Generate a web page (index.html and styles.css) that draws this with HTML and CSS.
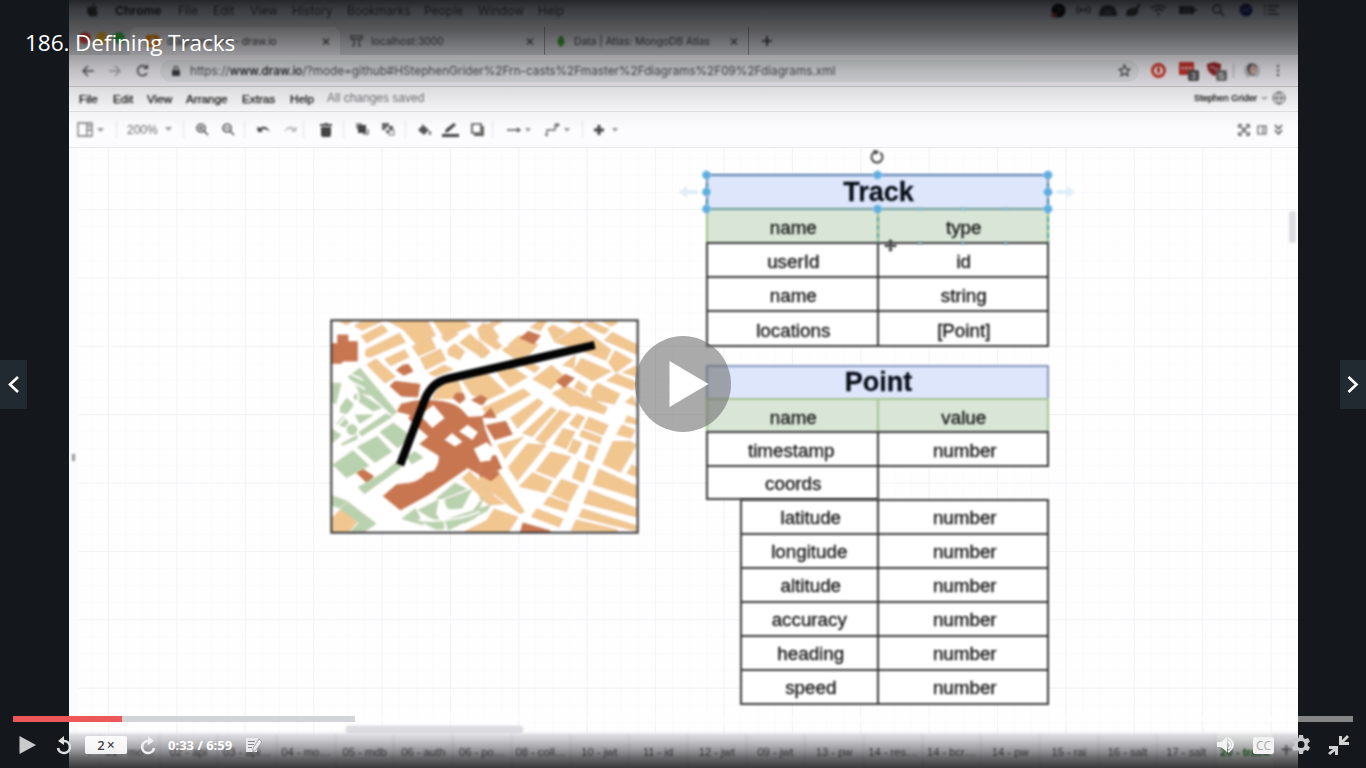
FILE: index.html
```html
<!DOCTYPE html>
<html lang="en">
<head>
<meta charset="utf-8">
<title>186. Defining Tracks</title>
<link rel="stylesheet" href="styles.css">
</head>
<body>
<main class="player">
<section class="video">
  <div class="mac-bar">
    <svg width="13" height="14" viewBox="0 0 13 14"><path fill="currentColor" d="M9 0C7 .3 6 2 6.200 3.200 8 3 9 1.500 9 0ZM11.500 5C10 3 8 3.500 6.500 4 3 2.600 1 4.500 1 7.300 1 10 3 13.500 4.500 13.500c1 0 1.500-.5 2.500-.5s1.500.5 2.200.5c1.200 0 2.200-2 2.800-3.500-2-1-2-4-.5-5Z"/></svg>
    <b>Chrome</b><span>File</span><span>Edit</span><span>View</span><span>History</span><span>Bookmarks</span><span>People</span><span>Window</span><span>Help</span>
    <svg width="15" height="15" viewBox="0 0 15 15"><circle cx="7.500" cy="7.500" r="7" fill="#14161b"/><path d="M4 4l8 3M8 8l-3 5" stroke="#687080" stroke-width="1"/><circle cx="3" cy="12" r="2.500" fill="#b43838"/></svg>
    <svg width="17" height="12" viewBox="0 0 17 12"><path d="M4 2Q0 6 4 10M13 2Q17 6 13 10M5 6h7M7 4 5 6l2 2M10 4l2 2-2 2" fill="none" stroke="currentColor" stroke-width="1.200"/></svg>
    <svg width="18" height="13" viewBox="0 0 18 13"><path fill="currentColor" d="M0 12C0 4 4 1 9 1s9 3 9 11Z"/><path d="M5 11c0-5 8-5 8 0M9 7v6" fill="none" stroke="#7c8490"/></svg>
    <svg width="17" height="14" viewBox="0 0 17 14"><path fill="currentColor" d="m1 12 1-5 7-3 1 2 4-6 1 2-2 4c1 4-2 7-5 7H1Z"/></svg>
    <svg width="17" height="13" viewBox="0 0 17 13"><path d="M1 4q7-5 15 0M4 7q5-4 9 0M8.500 8v4" fill="none" stroke="currentColor" stroke-width="1.500"/></svg>
    <svg width="20" height="12" viewBox="0 0 20 12"><path d="M1 2h15v8H1ZM16 5h3v2h-3Z" fill="currentColor"/><path d="M7 1v10M11 1v10" stroke="#7d8490"/></svg>
    <svg width="13" height="13" viewBox="0 0 13 13"><circle cx="5" cy="5" r="4" fill="none" stroke="currentColor" stroke-width="1.500"/><path d="m8 8 4 4" stroke="currentColor" stroke-width="1.500"/></svg>
    <svg width="14" height="14" viewBox="0 0 14 14"><circle cx="7" cy="7" r="6.500" fill="#283078"/><path d="m3 9 3-3 2 2 3-4" stroke="#9aa8e8" fill="none"/></svg>
    <svg width="15" height="12" viewBox="0 0 15 12"><path d="M0 2h2M0 6h2M0 10h2M4 2h11M4 6h8M4 10h11" stroke="currentColor" stroke-width="1.500"/></svg>
  </div>
  <div class="tab-strip">
    <div class="lights"><i class="red"></i><i class="yellow"></i><i class="green"></i></div>
    <div class="tab active"><svg width="13" height="12" viewBox="0 0 13 12"><rect width="13" height="12" rx="1" fill="#f08705"/><path d="M6.500 3 3.500 9M6.500 3l3 6" stroke="#fff" stroke-width="1.500"/></svg><span>diagrams.xml - draw.io</span><em>×</em></div>
    <div class="tab second"><svg width="13" height="12" viewBox="0 0 13 12"><path d="M1 1h11v3H1ZM4 4v7H2M9 4v7h2" fill="none" stroke="#444" stroke-width="1.200"/></svg><span>localhost:3000</span><em>×</em></div>
    <div class="tab third"><svg width="8" height="12" viewBox="0 0 8 12"><path d="M4 0Q11 7 4 12-3 7 4 0Z" fill="#3f9c35"/></svg><span>Data | Atlas: MongoDB Atlas</span><em>×</em></div>
    <svg class="new-tab" width="12" height="12" viewBox="0 0 12 12"><path d="M6 1v10M1 6h10" stroke="#333" stroke-width="1.700"/></svg>
  </div>
  <div class="address-bar">
    <svg width="12" height="12" viewBox="0 0 12 12"><path d="M12 6H1M6 1 1 6l5 5" fill="none" stroke="#555" stroke-width="1.500"/></svg>
    <svg width="12" height="12" viewBox="0 0 12 12"><path d="M0 6h11M6 1l5 5-5 5" fill="none" stroke="#aaa" stroke-width="1.400"/></svg>
    <svg width="13" height="13" viewBox="0 0 13 13"><path d="M11 9A5 5 0 1 1 10 3" fill="none" stroke="#555" stroke-width="1.600"/><path d="M12 0v5H7Z" fill="#555"/></svg>
    <div class="url"><svg width="8" height="10" viewBox="0 0 8 10"><rect y="4" width="8" height="6" rx="1" fill="#444"/><path d="M2 5V2.500a2 2 0 0 1 4 0V5" fill="none" stroke="#444" stroke-width="1.200"/></svg><span>https://<b>www.draw.io</b>/?mode=github#HStephenGrider%2Frn-casts%2Fmaster%2Fdiagrams%2F09%2Fdiagrams.xml</span><svg class="star" width="13" height="13" viewBox="0 0 24 24"><path d="m12 2 3 7 7 .6-5.500 5 1.700 7L12 18l-6.200 3.600 1.700-7-5.500-5L9 9Z" fill="none" stroke="#444" stroke-width="2.300"/></svg></div>
    <div class="extensions">
      <svg width="15" height="15" viewBox="0 0 15 15"><circle cx="7.500" cy="7.500" r="6" fill="#fff" stroke="#df3528" stroke-width="2.800"/><path d="M6 5q1.500-3 3 0v4q-1.500 3-3 0Z" fill="#df3528"/></svg>
      <svg width="20" height="20" viewBox="0 0 20 20"><rect x="0" y="1" width="15" height="13" rx="1" fill="#d43931"/><path d="M2 7h11" stroke="#eee" stroke-width="1.500" stroke-dasharray="3 1"/><rect x="9" y="9" width="11" height="11" rx="2" fill="#555"/><text x="12" y="18" font-size="9" fill="#fff">3</text></svg>
      <svg width="20" height="20" viewBox="0 0 20 20"><path d="M7 1 14 3c0 7-2 9-7 12C2 12 0 9 0 3Z" fill="#a22a2d"/><path d="M3 7q2-3 4 0t4 0" stroke="#eee" fill="none"/><rect x="9" y="9" width="11" height="11" rx="2" fill="#777"/><text x="12" y="18" font-size="9" fill="#fff">5</text></svg>
      <i class="rule"></i>
      <svg width="16" height="18" viewBox="0 0 16 18"><circle cx="8" cy="9" r="8" fill="#c6cad1"/><path d="M3 7Q4 0 10 2q4 1 2 6l-2 6-5-2Z" fill="#514d50"/><ellipse cx="9" cy="8" rx="3.500" ry="5" fill="#d7adab"/><path d="m4 15 7-1 2 3H5Z" fill="#fff"/></svg>
      <svg width="4" height="13" viewBox="0 0 4 13"><path d="M2 1v2M2 5.500v2M2 10v2" stroke="#555" stroke-width="2.200"/></svg>
    </div>
  </div>
  <div class="app-menu"><span>File</span><span>Edit</span><span>View</span><span>Arrange</span><span>Extras</span><span>Help</span><span class="saved">All changes saved</span><span class="user">Stephen Grider</span><svg width="7" height="5" viewBox="0 0 7 5"><path d="m1 1 2.500 2L6 1" fill="none" stroke="#444"/></svg><svg width="14" height="14" viewBox="0 0 14 14"><path d="M7 1a6 6 0 1 0 .1 0M1 7h12M7 1Q2 7 7 13 12 7 7 1" fill="none" stroke="#555"/></svg></div>
  <div class="toolbar">
    <svg width="27" height="16" viewBox="0 0 27 16"><path d="M1 1h14v13H1ZM10 1v13M10 4h5M10 8h5" fill="none" stroke="#777" stroke-width="1.300"/><path d="M20 6h7l-3.500 4Z" fill="#999"/></svg>
    <i></i><span class="zoom">200%</span><svg width="7" height="5" viewBox="0 0 7 5"><path d="M0 0h7L3.500 4Z" fill="#999"/></svg><i></i>
    <svg width="13" height="13" viewBox="0 0 13 13"><path d="M5 1a4 4 0 1 0 .1 0M8 8l4 4M3 5h4M5 3v4" fill="none" stroke="#555" stroke-width="1.600"/></svg>
    <svg width="13" height="13" viewBox="0 0 13 13"><path d="M5 1a4 4 0 1 0 .1 0M8 8l4 4M3 5h4" fill="none" stroke="#555" stroke-width="1.600"/></svg><i></i>
    <svg width="14" height="10" viewBox="0 0 14 10"><path d="m0 2 1 5h5L4 5q4-3 9 2Q9-1 3 3Z" fill="#444"/></svg>
    <svg width="14" height="10" viewBox="0 0 14 10"><path d="m14 2-1 5H8l2-2Q6 2 1 7 5-1 11 3Z" fill="#bbb"/></svg><i></i>
    <svg width="12" height="14" viewBox="0 0 12 14"><path d="M0 1h4l1-1h2l1 1h4v2H0ZM1 4h10v8q0 2-2 2H3q-2 0-2-2Z" fill="#444"/></svg><i></i>
    <svg width="13" height="13" viewBox="0 0 13 13"><path d="M7 11h5V6" fill="none" stroke="#777" stroke-width="1.500"/><rect width="6" height="6" fill="#999"/><rect x="2" y="2" width="8" height="8" fill="#444"/></svg>
    <svg width="13" height="13" viewBox="0 0 13 13"><rect x="0" y="0" width="7" height="7" fill="#666"/><rect x="4" y="3" width="7" height="7" fill="#555"/><path d="m3 6 3-3 2 3-3 2Z" fill="#eee"/><rect x="7" y="7" width="5" height="5" fill="#eee" stroke="#777"/></svg><i></i>
    <svg width="13" height="12" viewBox="0 0 13 12"><path d="m5 1 6 5-5 5-6-5Z" fill="#555"/><path d="m4 0 3 3M12 7q2 3 0 4-2-1 0-4" stroke="#666" fill="#777"/></svg>
    <svg width="17" height="16" viewBox="0 0 17 16"><path d="m3 11 1-4 8-6 2 2-8 7Z" fill="#444"/><path d="M0 13.500h17" stroke="#444" stroke-width="3"/></svg>
    <svg width="13" height="13" viewBox="0 0 13 13"><path d="M1 1h9v9H1Z" fill="#fff" stroke="#555" stroke-width="1.700"/><path d="M12 3v9H3" fill="none" stroke="#555" stroke-width="1.800"/></svg><i></i>
    <svg width="24" height="8" viewBox="0 0 24 8"><path d="M0 4h12M10 2l3 2-3 2" stroke="#555" fill="none" stroke-width="1.300"/><path d="M18 2h6l-3 4Z" fill="#999"/></svg>
    <svg width="25" height="14" viewBox="0 0 25 14"><path d="M2 13V7h8V2h4M0 11l2 2M11 0l3 2-3 2" stroke="#666" fill="none" stroke-width="1.300"/><path d="M19 5h6l-3 4Z" fill="#999"/></svg><i></i>
    <svg width="25" height="12" viewBox="0 0 25 12"><path d="M6 1v10M1 6h10" stroke="#444" stroke-width="3"/><path d="M19 4h6l-3 4Z" fill="#999"/></svg>
    <div class="view-tools"><svg width="12" height="12" viewBox="0 0 12 12"><path d="M1 4V1h3M8 1h3v3M11 8v3H8M4 11H1V8M3 3l6 6M9 3 3 9" fill="none" stroke="#444" stroke-width="1.500"/></svg><svg width="10" height="10" viewBox="0 0 10 10"><path d="M1 1h8v8H1ZM6 1v8" fill="none" stroke="#555" stroke-width="1.200"/></svg><svg width="9" height="12" viewBox="0 0 9 12"><path d="m1 1 3.500 4L8 1M1 6l3.500 4L8 6" fill="none" stroke="#444" stroke-width="1.400"/></svg></div>
  </div>
  <div class="canvas">
    <svg class="map" viewBox="33 30 921 639">
      <rect x="33" y="30" width="921" height="639" fill="#fff"/>
      <g class="orange">
        <path d="M60 34h35l-15 10ZM105 48l20-14h60l-38 17-20 9ZM125 78l62-32 15 18-62 34ZM138 120l100-49 17 25-105 45-13-4ZM208 34h115l22 42-54 28-40-46ZM278 110l55-24 14 29-51 22ZM302 145l59-27 15 32-58 28ZM196 147l58-27 12 21-54 25ZM142 164l26-16 57 52-30 18ZM328 190l45-24 24 12-51 20ZM342 34h92l17 14-78 33ZM365 82l33-25 15 16-34 22ZM385 118l20-16 28 22-15 24-33-14ZM420 98l30-25 58 54-18 17ZM473 56l18-16 24 12 20 28-12 22-45-28ZM345 251l28-38 38-9 18 54-24 6-67 2ZM428 212l52-12 15 63-38-8ZM427 505l22-20 70 70-12 27ZM37 625l24-25 52 33-28 32H37ZM435 665l80-40v40Z"/>
        <g transform="translate(480 0)">
          <path d="M12 50 42 34h22l-35 22ZM0 70l15-7 50 45-15 10L0 85ZM0 95l28 29-28 17ZM68 120l23-14 45 32-20 14ZM88 102l30-25 55 27-30 33ZM153 52l25-18h20l-18 28ZM204 56l16-10 38 20-36 24ZM266 34h44l-17 6ZM315 44l17-10 54 25-14 12ZM370 34h40v6l-18 8ZM224 95l75-45 93 70-15 30-77-30ZM375 91l22-23 72 36v28ZM386 157l20-34 50 29-48 35ZM53 182l25-23 62 42-50 30-30-34ZM0 190l25 5 50 49L0 278ZM112 155l20-10 45 28-12 14ZM160 207l55-40 32 28-35 42ZM250 165l35-27-4 36ZM282 180l22-34 88 38-54 28ZM430 187l38-18v30ZM382 212l28-20 58 25-8 22ZM219 250l40-22 52 28-7 28-32 4ZM284 233l11-20 26 18-6 17ZM335 243l18-22 65 31-15 29-65-13ZM295 288l23-30 63 35-10 18ZM438 276l20-16 12 28ZM8 295l122-57 20 15L30 323ZM93 324l81-57 14 12-75 75ZM130 369l83-76 14 7-71 79ZM168 388l72-87 31 12-80 88ZM269 341l23-28 21 9-20 34ZM312 353l15-30 57 23-15 28ZM222 401l28-45 34 10-26 50ZM300 378l7-17 57 22-5 18ZM266 424l14-35 24 10-17 32ZM315 443l13-39 25 9-15 40ZM435 335l8-17 25 10v14ZM411 373l16-28 37 16-12 22ZM54 406l73-23-30 32-22 30ZM86 472l57-70 53 5-84 104ZM170 482l42-55 59 14-46 62ZM278 503l18-48 32 12-18 49ZM120 529l38-40 57 25-20 33ZM216 553l29-44 50 18-26 47ZM192 583l15-22 60 21-8 22ZM156 619l15-22 77 30-11 23ZM369 462l31-67h50l18 10-47 81ZM442 490l15-25 11 8v26ZM340 523l17-45 111 50v35ZM312 579l15-38 141 54v25ZM297 620l12-22 159 49v15ZM275 661l14-30 122 28v5ZM0 500l52-20 80 125-12 5L0 518ZM0 529l71 52-41 3-30-20ZM0 665l43-67 70 24-28 43Z"/>
        </g>
      </g>
      <g class="brown">
        <path d="M36 101h17V75h31v20h28v58H69l-5 7H36ZM229 180l19-14 17-3 14 21-28 12ZM210 228l15-14 75 9-7 38-50-3ZM255 280l30-7q106-7 140 27l20 22 40-2 10 40 20 50-32 24 44 21 8 40-22 18-70-40-116 80-86 47-51-42 40-34 27-3q27 0 50-18l12-13 24-7q20-29 13-47l-56-34 26-22-60-54 6-12-40-10 12-22ZM399 264l10-15 21 1 5 17-16 13ZM455 270l22-12 22 11-15 16ZM110 489l13-15 38 25-20 19Z"/>
        <g transform="translate(480 0)"><path d="m120 84 25-20 36 13-20 25ZM229 215l27-22 27 12-30 28ZM0 255l20 10-10 18H0ZM5 322l28-28 15 29ZM18 346l59-12 20 39-53 16ZM0 345l20 50-20 10ZM0 450l47-14 18 39L0 500ZM121 666l8-27 81 23v4Z"/></g>
      </g>
      <g class="holes"><path d="m340 288 31 36-34 27-34-35ZM377 389l19-17 28 23-19 12ZM421 364l22-17 28 20-14 20ZM464 417l36-18 18 17-8 34-28 4Z"/></g>
      <g class="park">
        <path d="m82 202 38-28 110 132-12 10-65-60-36-8ZM36 220h27l-16 62-11-8ZM62 290l18-25 20 17-15 31-24-7ZM103 255l14-7 68 45-25 10-58-38ZM106 315h53l-40 25ZM50 342l20-24 15 20-10 13ZM117 367l80-55 19 8-91 58ZM64 402l48-27-2 13-43 18ZM36 357l27 19-27 23ZM180 366l40-27 51 39-38 36ZM112 411l60-32 43 46-50 32ZM39 464l60-42 48 45-68 36ZM184 493l45-37 15 15-110 80-20-19ZM260 440l25-15 24 17-34 20ZM36 557l46 17-25 20-21-9ZM60 596l24-20 84 65-36 24H92l25-27ZM246 626l40-30 24 49ZM295 600l60-30-8 40 14 25-35-15ZM350 565l55-46 35 18-76 30ZM375 569l80-30-30 57q-46 21-50-27ZM432 640l60-82-24 64ZM305 635l65 0 2 22-26 0ZM375 630l137-45-12 18-115 57Z"/><circle cx="96" cy="359" r="15"/>
      </g>
      <path class="paths" d="M79 200q55 50 27 88L50 350M75 208q40 15 60 30m-48-48q28 12 42 20M375 600q90 8 95-49M295 630q100 10 185-25"/>
      <path d="m240 465 70-184q20-63 75-75l439-101" fill="none" stroke="#050505" stroke-width="25"/>
      <rect x="34" y="31" width="919" height="637" fill="none" stroke="#333" stroke-width="6"/>
    </svg>

    <div class="diagram track">
      <div class="cell title">Track</div>
      <div class="cell head">name</div><div class="cell head">type</div>
      <div class="cell">userId</div><div class="cell">id</div>
      <div class="cell">name</div><div class="cell">string</div>
      <div class="cell">locations</div><div class="cell">[Point]</div>
    </div>
    <svg class="selection" viewBox="675 145 404 120" width="404" height="120">
      <path d="M707 175v34M1048 175v34M878 209v34M1048 209v34" stroke="#4ba3b5" stroke-width="1.500" stroke-dasharray="5 3"/>
      <path d="M707 175h341M707 209h341" stroke="#739fcb" stroke-width="1.500"/>
      <g fill="#5eade0" stroke="#b3d9f3" stroke-width=".7"><circle cx="706.500" cy="175" r="4.300"/><circle cx="877.500" cy="175" r="4.300"/><circle cx="1048" cy="175" r="4.300"/><circle cx="706.500" cy="192" r="4.300"/><circle cx="1048" cy="192" r="4.300"/><circle cx="706.500" cy="209" r="4.300"/><circle cx="877.500" cy="209" r="4.300"/><circle cx="1048" cy="209" r="4.300"/></g>
      <path d="M679 192l8-6v4h11v4h-11v4ZM1075 192l-8-6v4h-11v4h11v4Z" fill="#deedf8"/>
      <path d="m918 207 4 4m0-4-4 4m43-4 4 4m0-4-4 4m43-4 4 4m0-4-4 4M918 241l4 4m0-4-4 4m43-4 4 4m0-4-4 4m43-4 4 4m0-4-4 4" stroke="#8bc0dc"/>
      <path d="M880 152.500a5.500 5.500 0 1 1-5-.5" fill="none" stroke="#444" stroke-width="2"/><path d="m873 150 6 1-3 4Z" fill="#333"/>
      <path d="M890.500 240v11M885 245.500h11" stroke="#444" stroke-width="2.500"/><path d="m888 242 2.500-3 2.500 3m-5 7 2.500 3 2.500-3m-6-6-3 2.500 3 2.500m7-5 3 2.500-3 2.500" fill="#444"/>
    </svg>
    <div class="diagram point">
      <div class="cell title">Point</div>
      <div class="cell head">name</div><div class="cell head">value</div>
      <div class="cell nudge">timestamp</div><div class="cell nudge-right">number</div>
      <div class="cell last">coords</div>
    </div>
    <div class="diagram coords">
      <div class="cell">latitude</div><div class="cell">number</div>
      <div class="cell nudge">longitude</div><div class="cell">number</div>
      <div class="cell">altitude</div><div class="cell">number</div>
      <div class="cell nudge">accuracy</div><div class="cell">number</div>
      <div class="cell">heading</div><div class="cell">number</div>
      <div class="cell">speed</div><div class="cell">number</div>
    </div>
    <i class="panel-grip"></i><i class="scroll-y"></i><i class="scroll-x"></i>
  </div>
  <div class="sheet-tabs"><span class="more">⋮</span><span>01 - mo…</span><span>02 - api</span><span>03 - api…</span><span>04 - mo…</span><span>05 - mdb</span><span>06 - auth</span><span>06 - po…</span><span>08 - coll…</span><span>10 - jwt</span><span>11 - id</span><span>12 - jwt</span><span>09 - jwt</span><span>13 - pw</span><span>14 - res…</span><span>14 - bcr…</span><span>14 - pw</span><span>15 - rai</span><span>16 - salt</span><span>17 - salt</span><span class="current">20 - track</span><span class="add">+</span></div>
</section>
<div class="shade top"></div><div class="shade bottom"></div>
<h1>186. Defining Tracks</h1>
<div class="nav prev"><svg width="27" height="49" viewBox="0 0 27 49"><path d="m18 17-8 7.500 8 7.500" fill="none" stroke="#fff" stroke-width="2.600"/></svg></div>
<div class="nav next"><svg width="26" height="49" viewBox="0 0 26 49"><path d="m8.500 17 8 7.500-8 7.500" fill="none" stroke="#fff" stroke-width="2.600"/></svg></div>
<svg class="big-play" width="96" height="96" viewBox="0 0 96 96"><circle cx="48" cy="48" r="48" fill="#6d6d6d" fill-opacity=".58"/><path d="m34.500 25 39 23-39 23Z" fill="#fff"/></svg>
<div class="controls">
  <div class="progress"><i class="played"></i><i class="buffered"></i></div>
  <div class="buttons">
    <svg class="play" width="17" height="18" viewBox="0 0 17 18"><path d="m.5 0 16.500 9L.5 18Z" fill="#c9cacc"/></svg>
    <svg class="rewind" width="17" height="19" viewBox="0 0 17 19"><path d="M7 5h1a6 6 0 1 1-6 7" fill="none" stroke="#e0e1e3" stroke-width="2.600"/><path d="M2 5 8 0v9Z" fill="#e0e1e3"/></svg>
    <button>2<small>×</small></button>
    <svg class="forward" width="17" height="19" viewBox="0 0 17 19"><path d="M10 5H9a6 6 0 1 0 6 7" fill="none" stroke="#f1f1f3" stroke-width="2.600"/><path d="M15 5 9 0v9Z" fill="#f1f1f3"/></svg>
    <span class="time">0:33 / 6:59</span>
    <svg class="note" width="17" height="17" viewBox="0 0 17 17"><path d="M1 1h12l-1 14H1Z" fill="#e9e9eb"/><path d="M3 4.500h7M3 7.500h6M3 10.500h4" stroke="#87878d"/><path d="m14 2 3 3-6 8-3 2v-4Z" fill="#e9e9eb" stroke="#88888d" stroke-width=".7"/></svg>
    <div class="settings">
      <svg width="19" height="18" viewBox="0 0 19 18"><path d="M0 6h4l6-5v15l-6-5H0Z" fill="#f2f2f2"/><path d="M11 5q5 4 0 8M11 2q10 6 0 14" fill="none" stroke="#f2f2f2" stroke-width="2"/></svg>
      <span class="cc">CC</span>
      <svg width="20" height="20" viewBox="0 0 20 20"><path fill="#c9cacc" fill-rule="evenodd" d="m8 0-.5 3-1.700 1L3 3 1 6.500 3.300 8.500v2L1 12.500 3 16l2.800-1 1.700 1L8 19h4l.5-3 1.700-1 2.800 1 2-3.500-2.300-2v-2L19 6.500 17 3l-2.800 1-1.700-1L12 0ZM10 6a3.500 3.500 0 1 1 0 7 3.500 3.500 0 0 1 0-7Z"/></svg>
      <svg width="21" height="20" viewBox="0 0 21 20"><path d="M11 1h3v4l5-5 2 2-5 5h5v3H11ZM1 11h9v9H7v-4l-5 4-2-2 5-4H1Z" fill="#d1d2d4"/></svg>
    </div>
  </div>
</div>
</main>
</body>
</html>
```

FILE: styles.css
```css
* { box-sizing: border-box; }
body { margin: 0; background: #14171c; font-family: "Liberation Sans", Arial, sans-serif; overflow: hidden; }
.player { position: relative; width: 1366px; height: 768px; overflow: hidden; padding-left: 69px; background: #14171c; }
svg { display: block; flex: none; }
.video { width: 1229px; height: 768px; display: flex; flex-direction: column; background: #fdfdff; overflow: hidden; }
.mac-bar > *, .tab > *, .lights, .new-tab, .address-bar > svg, .url > *, .extensions, .app-menu > *, .toolbar > *, .sheet-tabs { filter: blur(.8px); }
.mac-bar, .tab-strip, .address-bar, .app-menu, .toolbar, .sheet-tabs { flex: none; }
.mac-bar { height: 20px; padding-left: 17px; display: grid; grid-template-columns: 29px 63px 35px 37px 42px 55px 77px 54px 60px 513px 24px 24px 26px 25px 28px 34px 27px 25px 20px; align-items: center; background: #ccd4e4; color: #434752; font: 12px Inter, sans-serif; white-space: nowrap; }
.mac-bar b { font-size: 12px; color: #2c2f38; }
.tab-strip { height: 35px; display: flex; align-items: center; background: #dbdce2; font: 11px Inter, sans-serif; color: #3c4043; }
.lights { width: 61px; padding-left: 10px; display: flex; gap: 5px; }
.lights i { width: 12px; height: 12px; border-radius: 50%; }
.red { background: #f04c48; }.yellow { background: #f3b62d; }.green { background: #35b94a; }
.tab { height: 28px; display: flex; align-items: center; white-space: nowrap; align-self: flex-end; padding-bottom: 1px; }
.tab em { margin-left: auto; font: 15px Inter, sans-serif; }
.tab svg { margin-right: 8px; }
.active { width: 210px; padding: 0 9px 1px 16px; border-radius: 7px 7px 0 0; background: #f3f1f7; font-size: 10.2px; }
.second { width: 205px; padding: 0 9px 1px 10px; border-right: 1px solid #969aa0; font-size: 10.3px; }
.third { width: 204px; padding: 0 9px 1px 12px; border-right: 1px solid #969aa0; font-size: 10.25px; }
.third svg { margin-right: 9px; }
.new-tab { margin: 6px 0 0 12px; }
.address-bar { height: 32px; padding-left: 13px; display: flex; align-items: center; gap: 15px; background: #fcfaff; border-bottom: 1px solid #d7d7d9; }
.url { width: 979px; height: 22px; margin-left: -4px; padding: 0 8px 0 12px; display: flex; align-items: center; border-radius: 12px; background: #edeff2; font: 11.75px Inter, sans-serif; color: #505358; white-space: nowrap; }
.url svg:first-child { margin-right: 10px; }
.url b { font-weight: 500; color: #111214; }
.url .star { margin-left: auto; }
.extensions { display: grid; grid-template-columns: 28px 28px 26px 11px 32px 8px; align-items: center; margin-left: -3px; }
.rule { width: 1px; height: 14px; background: #bbb; }
.app-menu { height: 25px; padding: 0 0 2px 10px; display: grid; grid-template-columns: 34px 34px 39px 56px 48px 37px 867px 67px 11px 14px; align-items: center; color: #111; font-size: 11.7px; border-bottom: 1px solid #e5e5e8; white-space: nowrap; }
.app-menu span { -webkit-text-stroke: .25px currentColor; }
.app-menu .saved { color: #75757a; -webkit-text-stroke: 0; font-size: 12px; }
.app-menu .user { font-size: 9.3px; }
.toolbar { height: 36px; padding-left: 8px; display: grid; align-items: center; grid-template-columns: 39px 11px 38px 18px 13px 26px 22px 13px 26px 20px 17px 23px 13px 26px 23px 13px 24px 29px 21px 15px 38px 37px 11px 645px 48px; border-bottom: 1px solid #e8e8ec; background: #fcfcfe; }
.toolbar > i { width: 1px; height: 17px; background: #e5e5e9; }
.zoom { font-size: 12px; color: #666; }
.view-tools { display: flex; align-items: center; gap: 7px; }
.canvas { flex: 1; position: relative; border-left: 9px solid #fafaff; background-color: #fefefe; background-image: linear-gradient(90deg, #f3f3f8 1px, transparent 1px), linear-gradient(#f3f3f7 1px, transparent 1px), linear-gradient(90deg, #fbfbfd 1px, transparent 1px), linear-gradient(#fbfbfd 1px, transparent 1px); background-size: 68.4px 68.4px, 68.4px 68.4px, 17.1px 17.1px, 17.1px 17.1px; background-position: 30px 61px; }
.canvas > * { filter: blur(.8px); }
.map { position: absolute; left: 253px; top: 172px; width: 307px; height: 213px; overflow: visible; }
.map g path, .map circle { stroke: #edc397; stroke-width: 4; }
.map .brown path { stroke: #cb8260; stroke-width: 3; }.map .park path, .map circle { stroke: #c6cfae; stroke-width: 3; }
.map .holes path { stroke: #fff; }
.orange { fill: #f2c78f; }.brown { fill: #c87650; }.holes { fill: #fff; }.park { fill: #b8d2b0; }
.map .paths { fill: none; stroke: #fff; stroke-width: 6; }
.diagram { position: absolute; left: 629px; display: grid; grid-template-columns: 170.5px 170.5px; font-size: 18.8px; color: #111; }
.cell { display: flex; align-items: center; justify-content: center; padding: 4px 0 0 2px; background: #fff; outline: 2px solid #383838; outline-offset: -1px; -webkit-text-stroke: .3px currentColor; }
.diagram .title { grid-column: 1 / 3; background: #dee6fc; outline: 2px solid #8497bd; padding-top: 0; font-size: 27px; font-weight: 700; color: #080e18; }
.head { background: #d9e6d7; outline: 2px solid #a4c28f; }
.track { top: 27px; grid-template-rows: 34px 34px 34px 34px 35px; }
.point { top: 218px; grid-template-rows: 33px 33px 34px 33px; }
.diagram .last { padding-top: 2px; }
.coords { top: 351.5px; left: 663px; grid-template-columns: 136.500px 170.500px; grid-auto-rows: 34.150px; }
.point .nudge { padding: 4px 2px 0 0; }.coords .nudge { padding-left: 0; }
.diagram .nudge-right, .coords .cell:nth-child(even) { padding-left: 4px; }
.coords .cell { padding-top: 2px; }
.coords .cell:nth-child(odd):not(.nudge) { padding-left: 3px; }
.selection { position: absolute; left: 597px; top: -3px; }
.panel-grip { position: absolute; left: -6px; top: 306px; width: 3px; height: 7px; background: #999; }
.scroll-y { position: absolute; left: 1211px; top: 63px; width: 7px; height: 32px; border-radius: 3px; background: #dedee1; }
.scroll-x { position: absolute; left: 268px; bottom: 1px; width: 177px; height: 7px; border-radius: 4px; background: #dddde1; box-shadow: 0 0 0 1px #eeeef1; }
.sheet-tabs { height: 34px; display: grid; grid-template-columns: 32px repeat(20, 58.7px) 23px; background: #eaeaf0; font-size: 11.2px; color: #505055; }
.sheet-tabs span { padding-top: 12px; text-align: center; border-right: 1px solid #d7d7dd; white-space: nowrap; }
.sheet-tabs .more { padding-left: 9px; }
.sheet-tabs .current { color: #176a20; background: #f0f3f1; font-weight: 700; }
.sheet-tabs .add { font-size: 20px; padding-top: 5px; border: 0; }
.shade { position: absolute; left: 69px; width: 1229px; }
.shade.top { top: 0; height: 130px; background: linear-gradient(rgba(0,0,0,.82) 0, rgba(0,0,0,.71) 10px, rgba(0,0,0,.60) 30px, rgba(0,0,0,.42) 50px, rgba(0,0,0,.24) 70px, rgba(0,0,0,.12) 90px, rgba(0,0,0,.04) 110px, transparent); }
.shade.bottom { bottom: 0; height: 38px; background: linear-gradient(transparent, rgba(0,0,0,.12) 9px, rgba(0,0,0,.35) 20px, rgba(0,0,0,.56) 28px, rgba(0,0,0,.76)); }
h1 { position: absolute; left: 25px; top: 28px; margin: 0; color: #fff; font: 400 22.6px/29px "Open Sans", sans-serif; letter-spacing: -.1px; white-space: nowrap; }
.nav { position: absolute; top: 360px; background: #222a31; }
.prev { left: 0; }.next { right: 0; }
.big-play { position: absolute; left: 635px; top: 336px; }
.controls { position: absolute; left: 13px; right: 13px; top: 716px; height: 52px; }
.progress { height: 6px; display: flex; background: rgba(255,255,255,.48); }
.played { width: 109px; background: #ed5757; }.buffered { width: 233px; background: #d3d4d7; }
.buttons { padding-left: 6px; height: 46px; display: flex; align-items: center; }
.rewind { margin-left: 20px; }
button { width: 42px; height: 18px; margin-left: 12px; border: 0; border-radius: 2px; padding: 0; background: rgba(255,255,255,.9); color: #41434b; font: 600 13px/18px "Open Sans", sans-serif; }
button small { font-size: 14px; margin-left: 2px; }
.forward { margin-left: 12px; }
.time { width: 66px; margin-left: 12px; color: #fff; font: 700 13px "Open Sans", sans-serif; letter-spacing: 0; white-space: nowrap; }
.note { margin-left: 11px; }
.settings { margin-left: auto; margin-right: 4px; display: flex; align-items: center; gap: 17px; }
.cc { width: 21px; height: 17px; border-radius: 2px; background: #f2f2f2; color: #aaa; font: 12px/17px "Open Sans", sans-serif; text-align: center; }
```
